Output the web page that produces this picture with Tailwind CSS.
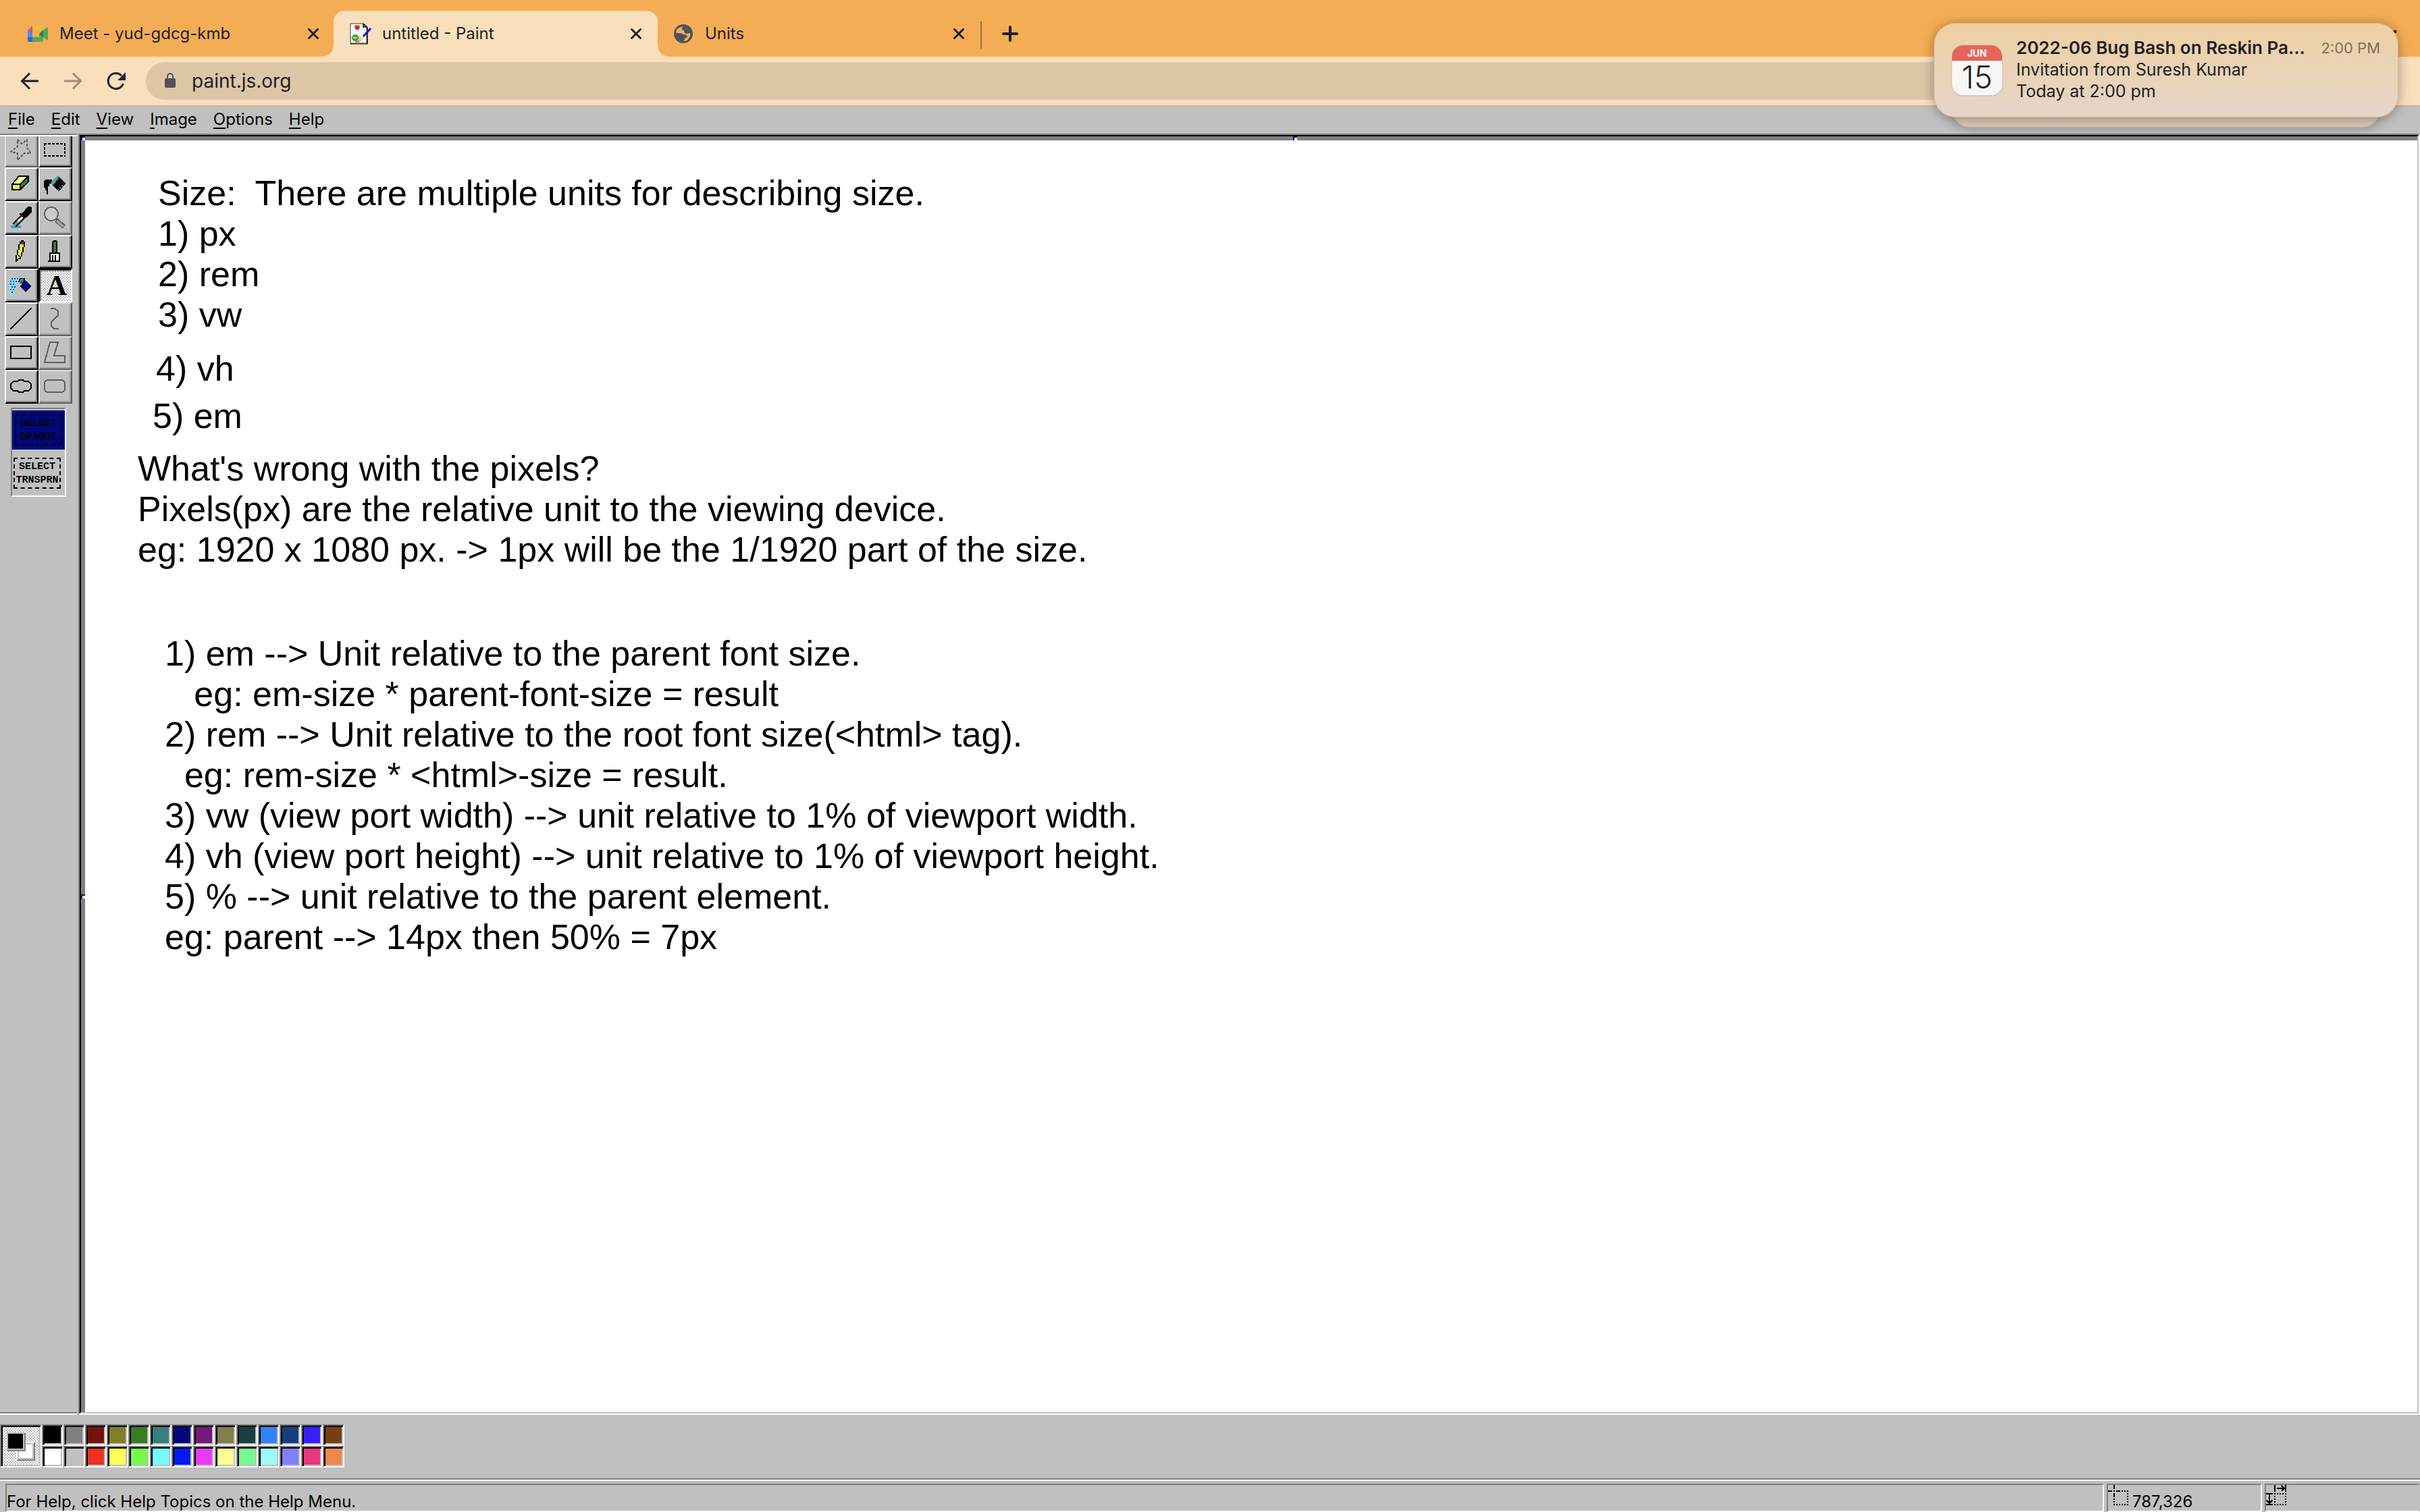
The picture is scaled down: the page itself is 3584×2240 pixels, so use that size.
<!DOCTYPE html>
<html lang="en">
<head>
<meta charset="utf-8">
<title>untitled - Paint</title>
<script src="https://cdn.jsdelivr.net/npm/@tailwindcss/browser@4"></script>
</head>
<body class="min-h-screen flex flex-col bg-[#c0c0c0] font-[Inter,sans-serif] text-black overflow-x-hidden">

<!-- Browser tabs -->
<header>
  <nav class="h-[84px] pt-4 pl-4 flex bg-[#f4ad54] text-[#202124] text-[24px]" aria-label="Tabs">
    <div class="w-[478px] h-[68px] flex items-center pl-6 pr-[22px]">
      <svg class="w-8 h-8 shrink-0" viewBox="0 0 32 32"><path fill="#d9583f" d="M1 11 8 4v7z"/><path fill="#efbb3d" d="M8 4h14a2 2 0 0 1 2 2v8l-6 5v-8H8z"/><path fill="#5385ec" d="M1 11h7v10H1z"/><path fill="#3067d0" d="M1 21h7v7H3a2 2 0 0 1-2-2z"/><path fill="#58a55c" d="M8 21h10v-5l6 3v7a2 2 0 0 1-2 2H8z"/><path fill="#58a55c" d="M24 11l5-4q2-1 2 1v16q0 2-2 1l-5-4z"/><path fill="#387d3d" d="M24 10v12l-6-6z"/></svg>
      <a href="#" class="ml-4 flex-1">Meet - yud-gdcg-kmb</a>
      <button aria-label="Close tab"><svg class="w-4 h-4" viewBox="0 0 16 16" stroke="#202124" stroke-width="3" stroke-linecap="round"><path d="M1.500 1.500l13 13M14.500 1.500l-13 13"/></svg></button>
    </div>
    <div class="relative w-[480px] h-[68px] flex items-center pl-6 pr-6 bg-[#f9dfbc] rounded-t-[16px]">
      <span class="absolute -left-4 bottom-0 w-4 h-4 bg-[radial-gradient(circle_at_0_0,transparent_15px,#f9dfbc_16px)]"></span>
      <span class="absolute -right-4 bottom-0 w-4 h-4 bg-[radial-gradient(circle_at_100%_0,transparent_15px,#f9dfbc_16px)]"></span>
      <svg class="w-8 h-8 shrink-0" viewBox="0 0 32 32"><path fill="#fff" stroke="#777" stroke-width="1.500" d="M1 1h19l5 5v24H1z"/><path d="M20 1l6 6v24M20 1v5h5" fill="none" stroke="#000" stroke-width="1.500"/><path d="M1 31h25" stroke="#000" stroke-width="2" stroke-dasharray="1 1"/><path fill="#e52a20" d="M7 5l2-2 2 1 2-1 2 2-1 4-3 2-3-2z"/><path d="M10 10l3 1M12 15l10-3" stroke="#bbb" stroke-dasharray="1 2"/><circle cx="13" cy="24" r="5" fill="#ccc"/><circle cx="8" cy="22" r="5" fill="#2fa82a"/><path d="M5 23l1-3 2 4 1-4 2 3" fill="none" stroke="#b7f7a8"/><path d="M8 28l6-1" stroke="#d33" stroke-width="1.500"/><path d="M22 18l-6 7" stroke="#f2e24d" stroke-width="3"/><path d="M31 8L20 20" stroke="#0a16ee" stroke-width="3"/></svg>
      <a href="#" class="ml-4 flex-1">untitled - Paint</a>
      <button aria-label="Close tab"><svg class="w-4 h-4" viewBox="0 0 16 16" stroke="#202124" stroke-width="3" stroke-linecap="round"><path d="M1.500 1.500l13 13M14.500 1.500l-13 13"/></svg></button>
    </div>
    <div class="w-[478px] h-[68px] flex items-center pl-[22px] pr-6">
      <svg class="w-8 h-8 shrink-0" viewBox="0 0 32 32"><circle cx="16" cy="16" r="14" fill="#50525a"/><path fill="#f4ad54" d="M16 5q-3 2-2 5 2 1 3 1 0 4 3 5l6-1q1 8-7 12h-4q3 0 3-3 1-3 4-3 0-1-1-3-2-1-5-1-2-2-5-2H5Q5 7 16 5z"/><path fill="#50525a" d="M5 16h8q4 1 4 5h-1q-1 3-1 6Q6 26 5 16z"/></svg>
      <a href="#" class="ml-4 flex-1">Units</a>
      <button aria-label="Close tab"><svg class="w-4 h-4" viewBox="0 0 16 16" stroke="#202124" stroke-width="3" stroke-linecap="round"><path d="M1.500 1.500l13 13M14.500 1.500l-13 13"/></svg></button>
    </div>
    <span class="w-[2px] h-10 mt-4 bg-[#9a7040]"></span>
    <button class="ml-[30px] h-[68px]" aria-label="New tab"><svg class="w-6 h-6" viewBox="0 0 24 24" stroke="#202124" stroke-width="4" stroke-linecap="round"><path d="M12 2v20M2 12h20"/></svg></button>
  </nav>

  <!-- Address bar -->
  <div class="h-[74px] flex items-center bg-[#f9dfbc] border-b-2 border-[#c9b296] pl-7">
    <button aria-label="Back"><svg class="w-8 h-8" viewBox="0 0 32 32" fill="none" stroke="#202124" stroke-width="3"><path d="M29 16H5M16 4.500L4.500 16 16 27.500"/></svg></button>
    <button class="ml-8" aria-label="Forward"><svg class="w-8 h-8" viewBox="0 0 32 32" fill="none" stroke="#9d8f7a" stroke-width="3"><path d="M3 16h24M16 4.500L27.500 16 16 27.500"/></svg></button>
    <button class="ml-8" aria-label="Reload"><svg class="w-8 h-8" viewBox="0 0 32 32"><path fill="none" stroke="#202124" stroke-width="3" d="M26.500 20A11.500 11.500 0 1 1 24 8"/><path fill="#202124" d="M30 3v12H18z"/></svg></button>
    <label class="ml-7 mr-[100px] flex-1 h-14 rounded-full bg-[#ddc6a6] flex items-center pl-7">
      <svg class="w-4 h-6" viewBox="0 0 16 24"><rect y="8" width="16" height="14" rx="2" fill="#50525a"/><path d="M4 9V5a4 4 0 0 1 8 0v4" fill="none" stroke="#50525a" stroke-width="2"/></svg>
      <input class="ml-6 flex-1 bg-transparent text-[28px] text-[#202124] outline-none" value="paint.js.org" aria-label="Address">
    </label>
  </div>
</header>

<!-- Paint menus -->
<nav class="h-10 pl-3 pb-[3px] flex items-center gap-6 text-[24px]" aria-label="Paint menu">
  <button><u class="underline-offset-4 decoration-2">F</u>ile</button>
  <button><u class="underline-offset-4 decoration-2">E</u>dit</button>
  <button><u class="underline-offset-4 decoration-2">V</u>iew</button>
  <button><u class="underline-offset-4 decoration-2">I</u>mage</button>
  <button><u class="underline-offset-4 decoration-2">O</u>ptions</button>
  <button><u class="underline-offset-4 decoration-2">H</u>elp</button>
</nav>

<main class="flex-1 flex">
  <!-- Toolbox -->
  <aside class="w-[116px] shrink-0 pr-[2px] flex">
    <div class="w-full flex flex-col border-t-2 border-b-2 border-t-[#808080] border-b-white">
      <div class="flex-1 border-t-2 border-b-2 border-t-white border-b-[#808080] pl-[7px]">
        <div class="w-[100px] grid grid-cols-2">
          <button disabled aria-label="Free-form select" class="h-[46px] pt-1 pb-2 pl-[6px] opacity-50 border-l-2 border-r-2 border-b-2 border-l-white border-r-black border-b-black shadow-[inset_-2px_-2px_#808080]"><svg class="w-8 h-8" viewBox="0 0 16 16" shape-rendering="crispEdges" fill="none" stroke="#000"><path stroke-dasharray="2 1" d="M5.500.5l3 3 4-3v6l3 4-5 0-5 5v-5l-5-1 5-4z"/></svg></button>
          <button aria-label="Select" class="h-[46px] pt-1 pb-2 pl-[6px] border-l-2 border-r-2 border-b-2 border-l-white border-r-black border-b-black shadow-[inset_-2px_-2px_#808080]"><svg class="w-8 h-8" viewBox="0 0 16 16" shape-rendering="crispEdges" fill="none" stroke="#000"><path stroke-dasharray="2 1" d="M0 3.500h16M0 12.500h16M.5 3v10M15.500 3v10"/></svg></button>

          <button aria-label="Eraser" class="h-[50px] pt-[6px] pb-2 pl-[6px] border-2 border-t-white border-l-white border-r-black border-b-black shadow-[inset_-2px_-2px_#808080]"><svg class="w-8 h-8" viewBox="0 0 16 16" shape-rendering="crispEdges"><path fill="#fffe91" d="M6 2h7v1L8 8H2z"/><path fill="#dfff4c" d="M2 8h6v5H2z"/><path fill="#377d22" d="M8 8l5-5v4l-5 5z"/><path fill="none" stroke="#000" d="M1.500 8.500h6v4h-6v-4l5-6h7v4l-6 6M7.500 8.500l6-6"/></svg></button>
          <button aria-label="Fill" class="h-[50px] pt-[6px] pb-2 pl-[6px] border-2 border-t-white border-l-white border-r-black border-b-black shadow-[inset_-2px_-2px_#808080]"><svg class="w-8 h-8" viewBox="0 0 16 16" shape-rendering="crispEdges"><path d="M0 6l1-1h5v3H4v2H3v6H2v-3H1v-2H0z"/><path d="M10 2l6 6-5 6-6-6z"/><path fill="#47a3a5" d="M5 7l5-5 1 1-5 6zM9 4h2L7 9H6z"/><path stroke="#47a3a5" stroke-dasharray="1 1" d="M10.500 13l4-4.500"/></svg></button>

          <button aria-label="Pick color" class="h-[50px] pt-[6px] pb-2 pl-[6px] border-2 border-t-white border-l-white border-r-black border-b-black shadow-[inset_-2px_-2px_#808080]"><svg class="w-8 h-8" viewBox="0 0 16 16" shape-rendering="crispEdges"><path fill="#47a3a5" d="M0 14h8v2H1zM5 10l2 2-4 3H1z"/><path stroke="#000" fill="none" d="M9 6L2 13M11 8l-7 7"/><path stroke="#fff" d="M9.500 7.500l-4 4"/><path d="M13 0h2l1 1v3l-4 4h-1v1h-1L7 6V5h2z"/></svg></button>
          <button disabled aria-label="Magnifier" class="h-[50px] pt-[6px] pb-2 pl-[6px] opacity-50 border-2 border-t-white border-l-white border-r-black border-b-black shadow-[inset_-2px_-2px_#808080]"><svg class="w-8 h-8" viewBox="0 0 16 16" shape-rendering="crispEdges"><path d="M9 10l6 5" stroke="#000" stroke-width="3.500"/><path d="M9.500 10.500l5 4.500" stroke="#808080" stroke-width="2"/><circle cx="5.500" cy="5.500" r="5" fill="#d4d4d4" stroke="#000"/></svg></button>

          <button aria-label="Pencil" class="h-[50px] pt-[6px] pb-2 pl-[6px] border-2 border-t-white border-l-white border-r-black border-b-black shadow-[inset_-2px_-2px_#808080]"><svg class="w-8 h-8" viewBox="0 0 16 16" shape-rendering="crispEdges"><path d="M8 0h2v1h1v4h-1v4H9v3H8v2H6v1H5v1H4v-5h1V7h1V3h1V1h1z"/><path fill="#dfff4c" d="M7 3h3v2H9v4H8v3H7v-1H6V7h1z"/><path fill="#fffed0" d="M5 11h1v1h1v1H6v1H5z"/><path fill="#a02018" d="M8 1h2v2H8z"/></svg></button>
          <button aria-label="Brush" class="h-[50px] pt-[6px] pb-2 pl-[6px] border-2 border-t-white border-l-white border-r-black border-b-black shadow-[inset_-2px_-2px_#808080]"><svg class="w-8 h-8" viewBox="0 0 16 16" shape-rendering="crispEdges"><path d="M7 0h2l1 1v8H6V1z"/><path fill="#377d22" d="M7 1h2v8H7z"/><path fill="#fff" stroke="#000" d="M4.500 9.500h7v6h-7z"/><path stroke="#000" d="M6.500 11v4M8.500 11v4M3 15.500h9"/></svg></button>

          <button aria-label="Airbrush" class="h-[50px] pt-[6px] pb-2 pl-[6px] border-2 border-t-white border-l-white border-r-black border-b-black shadow-[inset_-2px_-2px_#808080]"><svg class="w-8 h-8" viewBox="0 0 16 16" shape-rendering="crispEdges"><path fill="#73fbfd" d="M0 5l2-2h5v2H5l-2 3v5l-2 3H0z"/><path stroke="#001af5" stroke-dasharray="1 1" d="M0 5.500h5M1 3.500h6M0 7.500h4M1 9.500h3M0 11.500h3M1 13.500h2"/><path d="M7 3h4v4H9L6 6z"/><path fill="#387f80" d="M7 4l3-1v2L8 7H7z"/><path fill="#00087b" stroke="#000" stroke-width=".7" d="M11.500 5l4 4-4 4-4-4z"/></svg></button>
          <button aria-label="Text" aria-pressed="true" class="h-[50px] border-2 border-t-black border-l-black border-r-white border-b-white shadow-[inset_2px_2px_#808080] bg-[repeating-conic-gradient(#fff_0_25%,#c0c0c0_0_50%)] bg-[length:4px_4px] font-['Liberation_Serif',serif] font-bold text-[42px] leading-[46px] pl-1">A</button>

          <button aria-label="Line" class="h-[50px] pt-[6px] pb-2 pl-[6px] border-2 border-t-white border-l-white border-r-black border-b-black shadow-[inset_-2px_-2px_#808080]"><svg class="w-8 h-8" viewBox="0 0 16 16" shape-rendering="crispEdges"><path stroke="#000" d="M0 16L16 0"/></svg></button>
          <button disabled aria-label="Curve" class="h-[50px] pt-[6px] pb-2 pl-[6px] opacity-50 border-2 border-t-white border-l-white border-r-black border-b-black shadow-[inset_-2px_-2px_#808080]"><svg class="w-8 h-8" viewBox="0 0 16 16" shape-rendering="crispEdges" fill="none" stroke="#000"><path d="M5 .5h3l2.500 2v3l-5 5v3l2 2H11"/></svg></button>

          <button aria-label="Rectangle" class="h-[50px] pt-[6px] pb-2 pl-[6px] border-2 border-t-white border-l-white border-r-black border-b-black shadow-[inset_-2px_-2px_#808080]"><svg class="w-8 h-8" viewBox="0 0 16 16" shape-rendering="crispEdges"><path fill="none" stroke="#000" d="M.5 3.500h15v9H.5z"/></svg></button>
          <button disabled aria-label="Polygon" class="h-[50px] pt-[6px] pb-2 pl-[6px] opacity-50 border-2 border-t-white border-l-white border-r-black border-b-black shadow-[inset_-2px_-2px_#808080]"><svg class="w-8 h-8" viewBox="0 0 16 16" shape-rendering="crispEdges"><path fill="none" stroke="#000" d="M4.500.5h6l-3 10h8v5H.5z"/></svg></button>

          <button aria-label="Ellipse" class="h-[50px] pt-[6px] pb-2 pl-[6px] border-2 border-t-white border-l-white border-r-black border-b-black shadow-[inset_-2px_-2px_#808080]"><svg class="w-8 h-8" viewBox="0 0 16 16" shape-rendering="crispEdges"><path fill="none" stroke="#000" d="M.5 6.500v3l2 2h3l1 1h3l1-1h3l2-2v-3l-2-2h-3l-1-1h-3l-1 1h-3z"/></svg></button>
          <button disabled aria-label="Rounded rectangle" class="h-[50px] pt-[6px] pb-2 pl-[6px] opacity-50 border-2 border-t-white border-l-white border-r-black border-b-black shadow-[inset_-2px_-2px_#808080]"><svg class="w-8 h-8" viewBox="0 0 16 16" shape-rendering="crispEdges"><rect x=".5" y="3.500" width="15" height="9" rx="2.500" fill="none" stroke="#000"/></svg></button>
        </div>

        <!-- Selection mode -->
        <div class="mt-[6px] ml-[9px] w-[82px] h-[132px] border-2 border-t-[#808080] border-l-[#808080] border-r-white border-b-white pt-[2px] font-['Liberation_Mono',monospace] font-bold text-[15px] leading-5 text-center">
          <button class="block w-full h-[58px] bg-[#00087b] py-[6px] px-1"><span class="block h-[46px] pt-[2px] border-2 border-dashed border-black">SELECT<br>OPAQUE</span></button>
          <button class="block w-full h-[58px] mt-[6px] py-[6px] pl-[2px] pr-[6px]"><span class="block h-[46px] pt-[2px] border-2 border-dashed border-black">SELECT<br>TRNSPRN</span></button>
        </div>
      </div>
    </div>
  </aside>

  <!-- Canvas -->
  <div class="flex-1 flex border-2 border-t-[#808080] border-l-[#808080] border-r-white border-b-white">
    <div class="relative flex-1 flex pt-[6px] pl-[6px] bg-[#808080] border-2 border-t-black border-l-black border-r-[#c0c0c0] border-b-[#c0c0c0]">
      <span class="absolute left-0 top-0 size-[6px] bg-white border-t-2 border-l-2 border-[#00087b]"></span>
      <span class="absolute left-[calc(52%-4px)] top-0 size-[6px] bg-white border-t-2 border-l-2 border-[#00087b]"></span>
      <span class="absolute left-0 top-[1123px] size-[6px] bg-white border-t-2 border-l-2 border-[#00087b]"></span>
      <div class="flex-1 bg-white pt-12 font-['Liberation_Sans',Arial,sans-serif] text-[52px] leading-[60px] [&_p]:whitespace-pre">
        <div class="pl-[108px]"><p>Size:  There are multiple units for describing size.</p><p>1) px</p><p>2) rem</p><p>3) vw</p></div>
        <p class="mt-5 pl-[105px]">4) vh</p>
        <p class="mt-[10px] pl-[100px]">5) em</p>
        <div class="mt-[18px] pl-[78px]"><p>What's wrong with the pixels?</p><p>Pixels(px) are the relative unit to the viewing device.</p><p>eg: 1920 x 1080 px. -&gt; 1px will be the 1/1920 part of the size.</p></div>
        <div class="mt-[94px] pl-[118px]"><p>1) em --&gt; Unit relative to the parent font size.</p><p>   eg: em-size * parent-font-size = result</p><p>2) rem --&gt; Unit relative to the root font size(&lt;html&gt; tag).</p><p>  eg: rem-size * &lt;html&gt;-size = result.</p><p>3) vw (view port width) --&gt; unit relative to 1% of viewport width.</p><p>4) vh (view port height) --&gt; unit relative to 1% of viewport height.</p><p>5) % --&gt; unit relative to the parent element.</p><p>eg: parent --&gt; 14px then 50% = 7px</p></div>
      </div>
    </div>
  </div>
</main>

<!-- Colors -->
<section class="pt-[14px] pb-4 flex border-b-2 border-[#808080]" aria-label="Colors">
  <div class="relative w-[62px] h-16 border-2 border-t-[#808080] border-l-[#808080] border-r-white border-b-white shadow-[inset_2px_2px_#000,inset_-2px_-2px_#c0c0c0] bg-[repeating-conic-gradient(#fff_0_25%,#c0c0c0_0_50%)] bg-[length:4px_4px]">
    <span class="absolute left-[22px] top-[24px] size-7 bg-white border-2 border-t-white border-l-white border-r-[#808080] border-b-[#808080] shadow-[inset_2px_2px_#c0c0c0,inset_-2px_-2px_#c0c0c0]"></span>
    <span class="absolute left-2 top-[10px] size-7 bg-black border-2 border-t-[#c0c0c0] border-l-[#c0c0c0] border-r-[#808080] border-b-[#808080] shadow-[inset_-2px_-2px_#c0c0c0]"></span>
  </div>
  <div id="palette" class="grid grid-cols-[repeat(14,32px)]"></div>
</section>

<!-- Status bar -->
<footer class="h-12 pt-[4px] pl-2 flex gap-1 border-t-2 border-white text-[24px]">
  <p class="flex-1 h-[42px] border-2 border-t-[#808080] border-l-[#808080] border-r-white border-b-white leading-[50px] overflow-hidden">For Help, click Help Topics on the Help Menu.</p>
  <p class="w-[230px] h-[42px] flex border-2 border-t-[#808080] border-l-[#808080] border-r-white border-b-white leading-[50px] overflow-hidden"><svg class="w-8 h-8 mr-1" viewBox="0 0 16 16" shape-rendering="crispEdges" stroke="#000"><path stroke-dasharray="3 1 1 1" d="M0 4.500h10M4.500 0v10"/><path fill="none" stroke-dasharray="1 1" d="M10 4.500h5M14.500 4v11M4.500 10v5M4 14.500h11"/></svg>787,326</p>
  <p class="w-[230px] h-[42px] border-2 border-t-[#808080] border-l-[#808080] border-r-[#c0c0c0] border-b-white"><svg class="w-8 h-8" viewBox="0 0 16 16" shape-rendering="crispEdges" stroke="#000" fill="none"><path d="M6.500 0v5M14.500 0v5M8 2.500h6M11.500.5l2 2-2 2M0 6.500h5M0 14.500h5M2.500 7v7M.5 11.500l2 2 2-2"/><path stroke-dasharray="1 1" d="M6 6.500h9M6 14.500h9M6.500 6v9M14.500 6v9"/></svg></p>
</footer>

<!-- Desktop notification -->
<span class="absolute right-[35px] top-[45px] size-1 bg-black"></span>
<div class="absolute right-[58px] top-[120px] w-[636px] h-[69px] rounded-[28px] bg-[#dcc9b5] border border-[#c5b29b] shadow-[0_4px_16px_#0003]"></div>
<aside class="absolute right-8 top-[34px] w-[688px] h-[140px] rounded-[32px] bg-linear-to-b from-[#efd0a3] to-[#e4d5c8] border border-[#d2b78f] shadow-[0_2px_18px_#00000055] flex text-[#22211c]">
  <div class="mt-8 ml-[26px] w-[74px] h-[74px] rounded-[16px] overflow-hidden bg-[#f8f7f5] text-center shadow-sm">
    <div class="h-[23px] bg-[#e5645a] text-white font-bold text-[14px] leading-6">JUN</div>
    <div class="text-[46px] leading-[48px] font-light">15</div>
  </div>
  <div class="mt-5 ml-[21px] flex-1 pr-[26px] text-[25px] leading-8 whitespace-nowrap">
    <div class="flex justify-between"><strong class="font-semibold text-[26px]">2022-06 Bug Bash on Reskin Pa...</strong><time class="text-[22px] text-[#80705b]">2:00 PM</time></div>
    <p>Invitation from Suresh Kumar</p>
    <p>Today at 2:00 pm</p>
  </div>
</aside>

<script>
  const colors = ['#000000','#808080','#75140c','#808026','#377d22','#387f80','#00087b','#75197c','#80804a','#183f3f','#3282f7','#173f7c','#3520f5','#774014',
    '#ffffff','#c0c0c0','#ea3323','#fffe54','#75fa4c','#73fbfd','#001af5','#ea3af7','#fffe91','#75fa8d','#9ffcfd','#8080f9','#ea357f','#ef8650'];
  document.getElementById('palette').innerHTML = colors.map(c =>
    `<button aria-label="${c}" style="background:${c}" class="size-8 border-2 border-t-[#808080] border-l-[#808080] border-r-white border-b-white shadow-[inset_2px_2px_#000,inset_-2px_-2px_#c0c0c0]"></button>`).join('');
</script>
</body>
</html>
